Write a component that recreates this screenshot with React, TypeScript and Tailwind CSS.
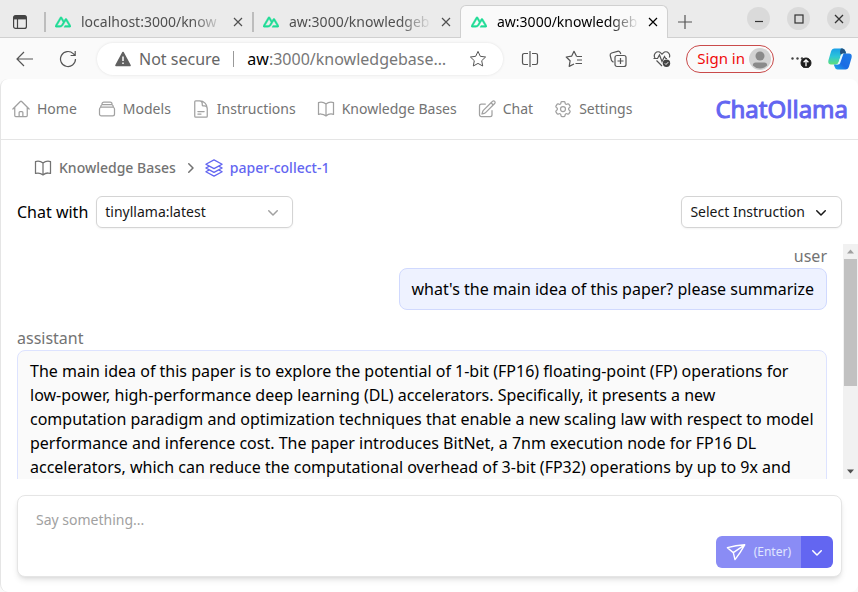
import { useState } from 'react';
import type { IconType } from 'react-icons';
import {
  HiMiniChevronDown,
  HiMiniChevronRight,
  HiOutlineBookOpen,
  HiOutlineCog6Tooth,
  HiOutlineDocumentText,
  HiOutlineHome,
  HiOutlinePencilSquare,
  HiOutlineRectangleStack,
  HiOutlineSquare3Stack3D,
} from 'react-icons/hi2';

const tabs = [
  { id: 1, title: 'localhost:3000/know', active: false },
  { id: 2, title: 'aw:3000/knowledgeb', active: false },
  { id: 3, title: 'aw:3000/knowledgeb', active: true },
];

const navItems: { label: string; icon: IconType }[] = [
  { label: 'Home', icon: HiOutlineHome },
  { label: 'Models', icon: HiOutlineRectangleStack },
  { label: 'Instructions', icon: HiOutlineDocumentText },
  { label: 'Knowledge Bases', icon: HiOutlineBookOpen },
  { label: 'Chat', icon: HiOutlinePencilSquare },
  { label: 'Settings', icon: HiOutlineCog6Tooth },
];

const messages = [
  { role: 'user', content: "what's the main idea of this paper? please summarize" },
  {
    role: 'assistant',
    content:
      'The main idea of this paper is to explore the potential of 1-bit (FP16) floating-point (FP) operations for low-power, high-performance deep learning (DL) accelerators. Specifically, it presents a new computation paradigm and optimization techniques that enable a new scaling law with respect to model performance and inference cost. The paper introduces BitNet, a 7nm execution node for FP16 DL accelerators, which can reduce the computational overhead of 3-bit (FP32) operations by up to 9x and',
  },
];

function NuxtLogo() {
  return (
    <svg viewBox="0 0 24 24" className="size-4 shrink-0 fill-[#1fdc96] stroke-[#1fdc96]" strokeWidth="0.6" aria-hidden="true">
      <path d="M13.4642 19.8295h8.9218c.2834 0 .5618-.0723.8072-.2098a1.5899 1.5899 0 0 0 .5908-.5732 1.5293 1.5293 0 0 0 .216-.783 1.529 1.529 0 0 0-.2167-.7828L17.7916 7.4142a1.5904 1.5904 0 0 0-.5907-.573 1.6524 1.6524 0 0 0-.807-.2099c-.2833 0-.5616.0724-.807.2098a1.5904 1.5904 0 0 0-.5907.5731L13.4642 9.99l-2.9954-5.0366a1.5913 1.5913 0 0 0-.591-.573 1.6533 1.6533 0 0 0-.8071-.2098c-.2834 0-.5617.0723-.8072.2097a1.5913 1.5913 0 0 0-.591.573L.2168 17.4808A1.5292 1.5292 0 0 0 0 18.2635c-.0001.2749.0744.545.216.783a1.59 1.59 0 0 0 .5908.5732c.2454.1375.5238.2098.8072.2098h5.6003c2.219 0 3.8554-.9454 4.9813-2.7899l2.7337-4.5922 1.4642-2.4578 4.3944 7.382h-5.8586ZM7.123 17.3694l-3.9083-.0009 5.8586-9.8421 2.9232 4.921-1.9572 3.2897c-.7478 1.1967-1.5972 1.6323-2.9163 1.6323z" />
    </svg>
  );
}

function TabStrip() {
  return (
    <div className="flex h-[38px] shrink-0 items-end border-b border-[#d0d0d0] bg-[#ebebeb]">
      <button aria-label="Tab actions" className="flex h-[30px] w-[44px] items-center justify-center pr-1">
        <svg viewBox="0 0 16 16" className="size-4" fill="none" stroke="#444" strokeWidth="1.2">
          <rect x="1.6" y="1.6" width="12.8" height="12.8" rx="2" />
          <path d="M2 3.6h12" strokeWidth="3.6" />
          <path d="M5.5 5v9" />
        </svg>
      </button>
      {tabs.map((tab) => (
        <div
          key={tab.id}
          className={
            tab.active
              ? '-mb-px flex h-[33px] w-[208px] items-center rounded-t-md border-x border-t border-[#d0d0d0] bg-[#fafafa] pl-2.5 pr-1.5 text-black'
              : 'flex h-[30px] w-[208px] items-center pr-1.5 text-[#505050]'
          }
        >
          {!tab.active && <span className="mr-[9px] h-5 w-0.5 bg-[#bdbdbd]" />}
          <NuxtLogo />
          <span className="ml-2.5 min-w-0 flex-1 whitespace-nowrap text-sm [mask-image:linear-gradient(to_right,#000_78%,transparent)]">
            {tab.title}
          </span>
          <button aria-label="Close tab" className="ml-1.5 flex size-4 items-center justify-center">
            <svg viewBox="0 0 10 10" className="size-2.5" stroke="currentColor" strokeWidth="1.2">
              <path d="M1 1l8 8M9 1l-8 8" />
            </svg>
          </button>
        </div>
      ))}
      <button aria-label="New tab" className="ml-2.5 flex h-[30px] items-center">
        <svg viewBox="0 0 14 14" className="size-3.5" stroke="#555" strokeWidth="1.2">
          <path d="M7 0v14M0 7h14" />
        </svg>
      </button>
      <div className="ml-auto flex gap-[17px] self-center pr-2 text-[#333]">
        <button aria-label="Minimize" className="flex size-[23px] items-center justify-center rounded-full bg-[#dadada]">
          <svg viewBox="0 0 10 10" className="size-2.5" stroke="currentColor" strokeWidth="1.2">
            <path d="M1 7.5h8" />
          </svg>
        </button>
        <button aria-label="Maximize" className="flex size-[23px] items-center justify-center rounded-full bg-[#dadada]">
          <svg viewBox="0 0 10 10" className="size-2.5" fill="none" stroke="currentColor" strokeWidth="1.2">
            <rect x="1" y="1" width="8" height="8" />
          </svg>
        </button>
        <button aria-label="Close window" className="flex size-[23px] items-center justify-center rounded-full bg-[#dadada]">
          <svg viewBox="0 0 10 10" className="size-2.5" stroke="currentColor" strokeWidth="1.3">
            <path d="M1 1l8 8M9 1l-8 8" />
          </svg>
        </button>
      </div>
    </div>
  );
}

function Toolbar() {
  return (
    <div className="flex h-[41px] shrink-0 items-center bg-[#fafafa] pr-1.5 pl-4 text-[#555]">
      <button aria-label="Back">
        <svg viewBox="0 0 18 18" className="size-[18px]" fill="none" stroke="currentColor" strokeWidth="1.2">
          <path d="M17 9H1M8 2L1 9l7 7" />
        </svg>
      </button>
      <button aria-label="Refresh" className="ml-[25px]">
        <svg viewBox="0 0 18 18" className="size-[18px]" fill="none" stroke="currentColor" strokeWidth="1.2">
          <path d="M16.5 9a7.5 7.5 0 1 1-2.3-5.4L16 5.3M16.2 1v4.5h-4.6" />
        </svg>
      </button>
      <div className="ml-5 flex h-8 min-w-0 flex-1 items-center rounded-full bg-white pr-4 pl-[18px] text-base whitespace-nowrap shadow-[0_0_3px_rgba(0,0,0,0.1)]">
        <svg viewBox="0 0 16 16" className="mr-2 size-4 shrink-0" aria-hidden="true">
          <path d="M8 1.5L15 14.5H1z" fill="#616161" stroke="#616161" strokeWidth="1.6" strokeLinejoin="round" />
          <path d="M8 5.5v4.6M8 11.4v1.6" stroke="#fff" strokeWidth="1.5" />
        </svg>
        <span className="text-[#666]">Not secure</span>
        <span className="mx-[13px] h-4 w-px shrink-0 bg-[#999]" />
        <span className="min-w-0 flex-1 text-[#777]">
          <span className="text-black">aw</span>:3000/knowledgebase…
        </span>
        <button aria-label="Add to favorites">
          <svg viewBox="0 0 18 18" className="size-[18px]" fill="none" stroke="currentColor" strokeLinejoin="round">
            <path d="M9 1.4l2.3 4.9 5.3.7-3.9 3.7 1 5.3L9 13.4 4.3 16l1-5.3L1.4 7l5.3-.7z" />
          </svg>
        </button>
      </div>
      <div className="ml-[18px] flex items-center gap-[26px]">
        <button aria-label="Split screen">
          <svg viewBox="0 0 18 18" className="size-[18px]" fill="none" stroke="currentColor" strokeWidth="1.2">
            <path d="M7 3.5H3.2a1.7 1.7 0 0 0-1.7 1.7v7.6a1.7 1.7 0 0 0 1.7 1.7H7M11 3.5h3.8a1.7 1.7 0 0 1 1.7 1.7v7.6a1.7 1.7 0 0 1-1.7 1.7H11M9 1v16" />
          </svg>
        </button>
        <button aria-label="Favorites">
          <svg viewBox="0 0 18 18" className="size-[18px]" fill="none" stroke="currentColor" strokeWidth="1.2" strokeLinejoin="round">
            <path d="M11.5 6.3L9 1.3 6.6 6.2l-5.4.8 3.9 3.8-.9 5.6L9 14M11.5 6.5H17M12 10h5M10.5 13.5H17" />
          </svg>
        </button>
        <button aria-label="Collections">
          <svg viewBox="0 0 18 18" className="size-[18px]" fill="none" stroke="currentColor" strokeWidth="1.2">
            <path d="M4.5 12.3L3.5 11.5Q2.7 11 2.4 10L1.2 5.5Q.8 3.6 2.6 3L8.5 1.3Q10.4.8 11.2 2.6L11.8 4" />
            <rect x="6" y="5.5" width="11" height="11" rx="2" />
            <path d="M11.5 8v6M8.5 11h6" />
          </svg>
        </button>
        <button aria-label="Browser essentials">
          <svg viewBox="0 0 18 18" className="size-[18px]" fill="none" stroke="currentColor" strokeWidth="1.2">
            <path d="M2 8a4.200 4.200 0 0 1 .3-4.900 4 4 0 0 1 5.600 0L9 4.200l1.100-1.100a4 4 0 0 1 5.600 0A4.200 4.200 0 0 1 16.300 7.500M3.500 10.500L9 16" />
            <path d="M.5 8.500h4l2-3.500 2.500 6.500 2.500-5 1.200 2h1.300" />
            <circle cx="13.5" cy="13.2" r="3.7" fill="#444" stroke="none" />
            <path d="M11.9 13.4l1.100 1.100 2.200-2.300" stroke="#fff" strokeWidth="1" />
          </svg>
        </button>
      </div>
      <button className="ml-[15px] flex h-7 items-center gap-1 rounded-full border border-[#c94a4a] pr-0.5 pl-2.5 text-[15px] whitespace-nowrap text-[#f00a0a]">
        Sign in
        <svg viewBox="0 0 22 22" className="size-[22px]" aria-hidden="true">
          <circle cx="11" cy="11" r="11" fill="#d2d2d2" />
          <circle cx="11" cy="8" r="4.5" fill="#8a8a8a" />
          <path d="M3.8 17.500q0-3 3-3h8.400q3 0 3 3a10 10 0 0 1-14.400 0z" fill="#8a8a8a" />
        </svg>
      </button>
      <button aria-label="Settings and more" className="ml-4">
        <svg viewBox="0 0 22 18" className="h-[18px] w-[22px]">
          <g fill="#444">
            <circle cx="2.5" cy="8.5" r="1.2" />
            <circle cx="7.5" cy="8.5" r="1.2" />
            <circle cx="12" cy="8.5" r="1.2" />
          </g>
          <circle cx="16" cy="13" r="5" fill="#1c1c1c" stroke="#1c1c1c" />
          <path d="M16 16.300V10M13.600 12.200L16 9.800l2.400 2.400" fill="none" stroke="#fff" strokeWidth="1.3" />
        </svg>
      </button>
      <button aria-label="Copilot" className="ml-4">
        <svg viewBox="0 0 24 22" className="h-[22px] w-6">
          <defs>
            <linearGradient id="copilotLeft" x1="0" y1="0" x2="0" y2="1">
              <stop offset="0" stopColor="#1b9fe8" />
              <stop offset="0.5" stopColor="#2cc5d8" />
              <stop offset="1" stopColor="#5ee07a" />
            </linearGradient>
            <linearGradient id="copilotRight" x1="1" y1="0" x2="0" y2="1">
              <stop offset="0" stopColor="#1f7ce6" />
              <stop offset="0.6" stopColor="#1b6be4" />
              <stop offset="1" stopColor="#1eb0ea" />
            </linearGradient>
          </defs>
          <path d="M6.500.500h8q2 0 2.800 2.500l.9 2.500h-3q-1.800 0-2.400 2l-2 6.500q-.8 2.500-3 2.500H3q-3.500 0-2.500-4.500L3 3.500Q3.900.500 6.500.500z" fill="url(#copilotLeft)" />
          <path d="M17.500 21.500h-8q-2 0-2.800-2.500l-.9-2.500h3q1.800 0 2.400-2l2-6.500q.8-2.500 3-2.500H21q3.500 0 2.500 4.500L21 18.500q-.9 3-3.500 3z" fill="url(#copilotRight)" />
          <path d="M13 .500h1.500q2 0 2.800 2.500l.9 2.500h-2.900q-1.400 0-2.300 1.500-2-3 0-6.500z" fill="#24527f" />
          <path d="M12.800 7.500q.6-2 2.400-2h.3L12.200 15q-.6 1.500-2.200 1.500H7.800q2 0 2.700-2z" fill="#e8fbff" />
        </svg>
      </button>
    </div>
  );
}

function AppHeader() {
  return (
    <header className="flex h-[61px] shrink-0 items-center justify-between border-b border-neutral-200 px-2.5">
      <nav className="flex items-center gap-5">
        {navItems.map(({ label, icon: Icon }) => (
          <a key={label} href="#" className="flex items-center gap-1.5 text-sm whitespace-nowrap text-neutral-500">
            <Icon className="size-5 text-neutral-400" />
            {label}
          </a>
        ))}
      </nav>
      <h1 className="text-2xl text-[#6366f1] [-webkit-text-stroke:1px_currentColor]">ChatOllama</h1>
    </header>
  );
}

function Breadcrumb() {
  return (
    <nav aria-label="Breadcrumb" className="flex items-center px-4 text-sm font-medium">
      <a href="#" className="flex items-center gap-1.5 text-neutral-500">
        <HiOutlineBookOpen className="size-5" />
        Knowledge Bases
      </a>
      <HiMiniChevronRight className="mx-1 size-5 text-neutral-500" />
      <a href="#" className="flex items-center gap-1.5 text-[#6366f1]">
        <HiOutlineSquare3Stack3D className="size-5" />
        paper-collect-1
      </a>
    </nav>
  );
}

function ChatOptions() {
  return (
    <div className="mt-[18px] flex items-center">
      <label htmlFor="model">Chat with</label>
      <div className="ml-2 grid w-[197px] items-center">
        <select
          id="model"
          className="col-start-1 row-start-1 h-8 appearance-none rounded-md border border-neutral-300 bg-white pr-8 pl-2 text-sm text-neutral-900 shadow-xs"
        >
          <option>tinyllama:latest</option>
        </select>
        <HiMiniChevronDown className="pointer-events-none col-start-1 row-start-1 mr-2.5 size-5 justify-self-end text-neutral-400" />
      </div>
      <button className="ml-auto flex h-8 items-center gap-1.5 rounded-md border border-neutral-300 bg-white pr-2.5 pl-2 text-sm text-neutral-900 shadow-xs">
        Select Instruction
        <HiMiniChevronDown className="size-5" />
      </button>
    </div>
  );
}

function MessageList() {
  return (
    <div className="mt-4 flex min-h-0 flex-1">
      <div className="flex min-w-0 flex-1 flex-col gap-4 overflow-hidden pr-4">
        {messages.map((message) => (
          <div
            key={message.role}
            className={message.role === 'user' ? 'flex shrink-0 flex-col items-end' : 'flex shrink-0 flex-col'}
          >
            <div className="text-neutral-500">{message.role}</div>
            <div
              className={
                message.role === 'user'
                  ? 'rounded-lg border border-[#d0d9fe] bg-[#eef2ff] px-3 py-2'
                  : 'rounded-lg border border-[#dde3ff] bg-neutral-50 px-3 py-2'
              }
            >
              {message.content}
            </div>
          </div>
        ))}
      </div>
      {/* Scrollbar */}
      <div aria-hidden="true" className="flex w-[15px] flex-col bg-[#f1f1f1]">
        <svg viewBox="0 0 15 15" className="size-[15px]">
          <path d="M4 9.5h7L7.5 5.5z" fill="#a0a0a0" />
        </svg>
        <div className="mx-px h-[127px] bg-[#c1c1c1]" />
        <svg viewBox="0 0 15 15" className="mt-auto size-[15px]">
          <path d="M4 5.5h7L7.5 9.5z" fill="#505050" />
        </svg>
      </div>
    </div>
  );
}

function MessageInput() {
  const [text, setText] = useState('');

  return (
    <form
      onSubmit={(e) => e.preventDefault()}
      className="mt-4 mr-4 mb-[15px] flex flex-col rounded-lg border border-neutral-200 bg-white p-2 shadow-md"
    >
      <textarea
        aria-label="Message"
        rows={1}
        value={text}
        onChange={(e) => setText(e.target.value)}
        placeholder="Say something..."
        className="h-8 resize-none px-2.5 py-1.5 text-sm outline-none placeholder:text-neutral-400"
      />
      <div className="flex h-8 self-end overflow-hidden rounded-md text-white">
        <button type="submit" className="flex items-center gap-2 bg-[#8a8cf5] px-2.5">
          <svg viewBox="0 0 20 20" className="size-5" fill="none" stroke="currentColor" strokeWidth="1.4" strokeLinejoin="round" strokeLinecap="round">
            <path d="M7.3 10.6L1.4 5.7Q10 3.2 18.700 2.800 14.500 10.500 9 17.600zM7.300 10.600L18.700 2.800" />
          </svg>
          <span className="text-xs text-indigo-100">(Enter)</span>
        </button>
        <button type="button" aria-label="Send options" className="flex w-8 items-center justify-center bg-[#6366f1]">
          <HiMiniChevronDown className="size-5" />
        </button>
      </div>
    </form>
  );
}

export default function App() {
  return (
    <div className="flex h-screen flex-col overflow-hidden bg-[#fafafa] font-['Noto_Sans',sans-serif] text-base text-black">
      <TabStrip />
      <Toolbar />
      <div className="flex min-h-0 flex-1 flex-col overflow-hidden rounded-lg border-l border-neutral-200 bg-white">
        <AppHeader />
        <main className="flex min-h-0 flex-1 flex-col pt-[18px] pl-4">
          <Breadcrumb />
          <div className="pr-4">
            <ChatOptions />
          </div>
          <MessageList />
          <MessageInput />
        </main>
      </div>
    </div>
  );
}
